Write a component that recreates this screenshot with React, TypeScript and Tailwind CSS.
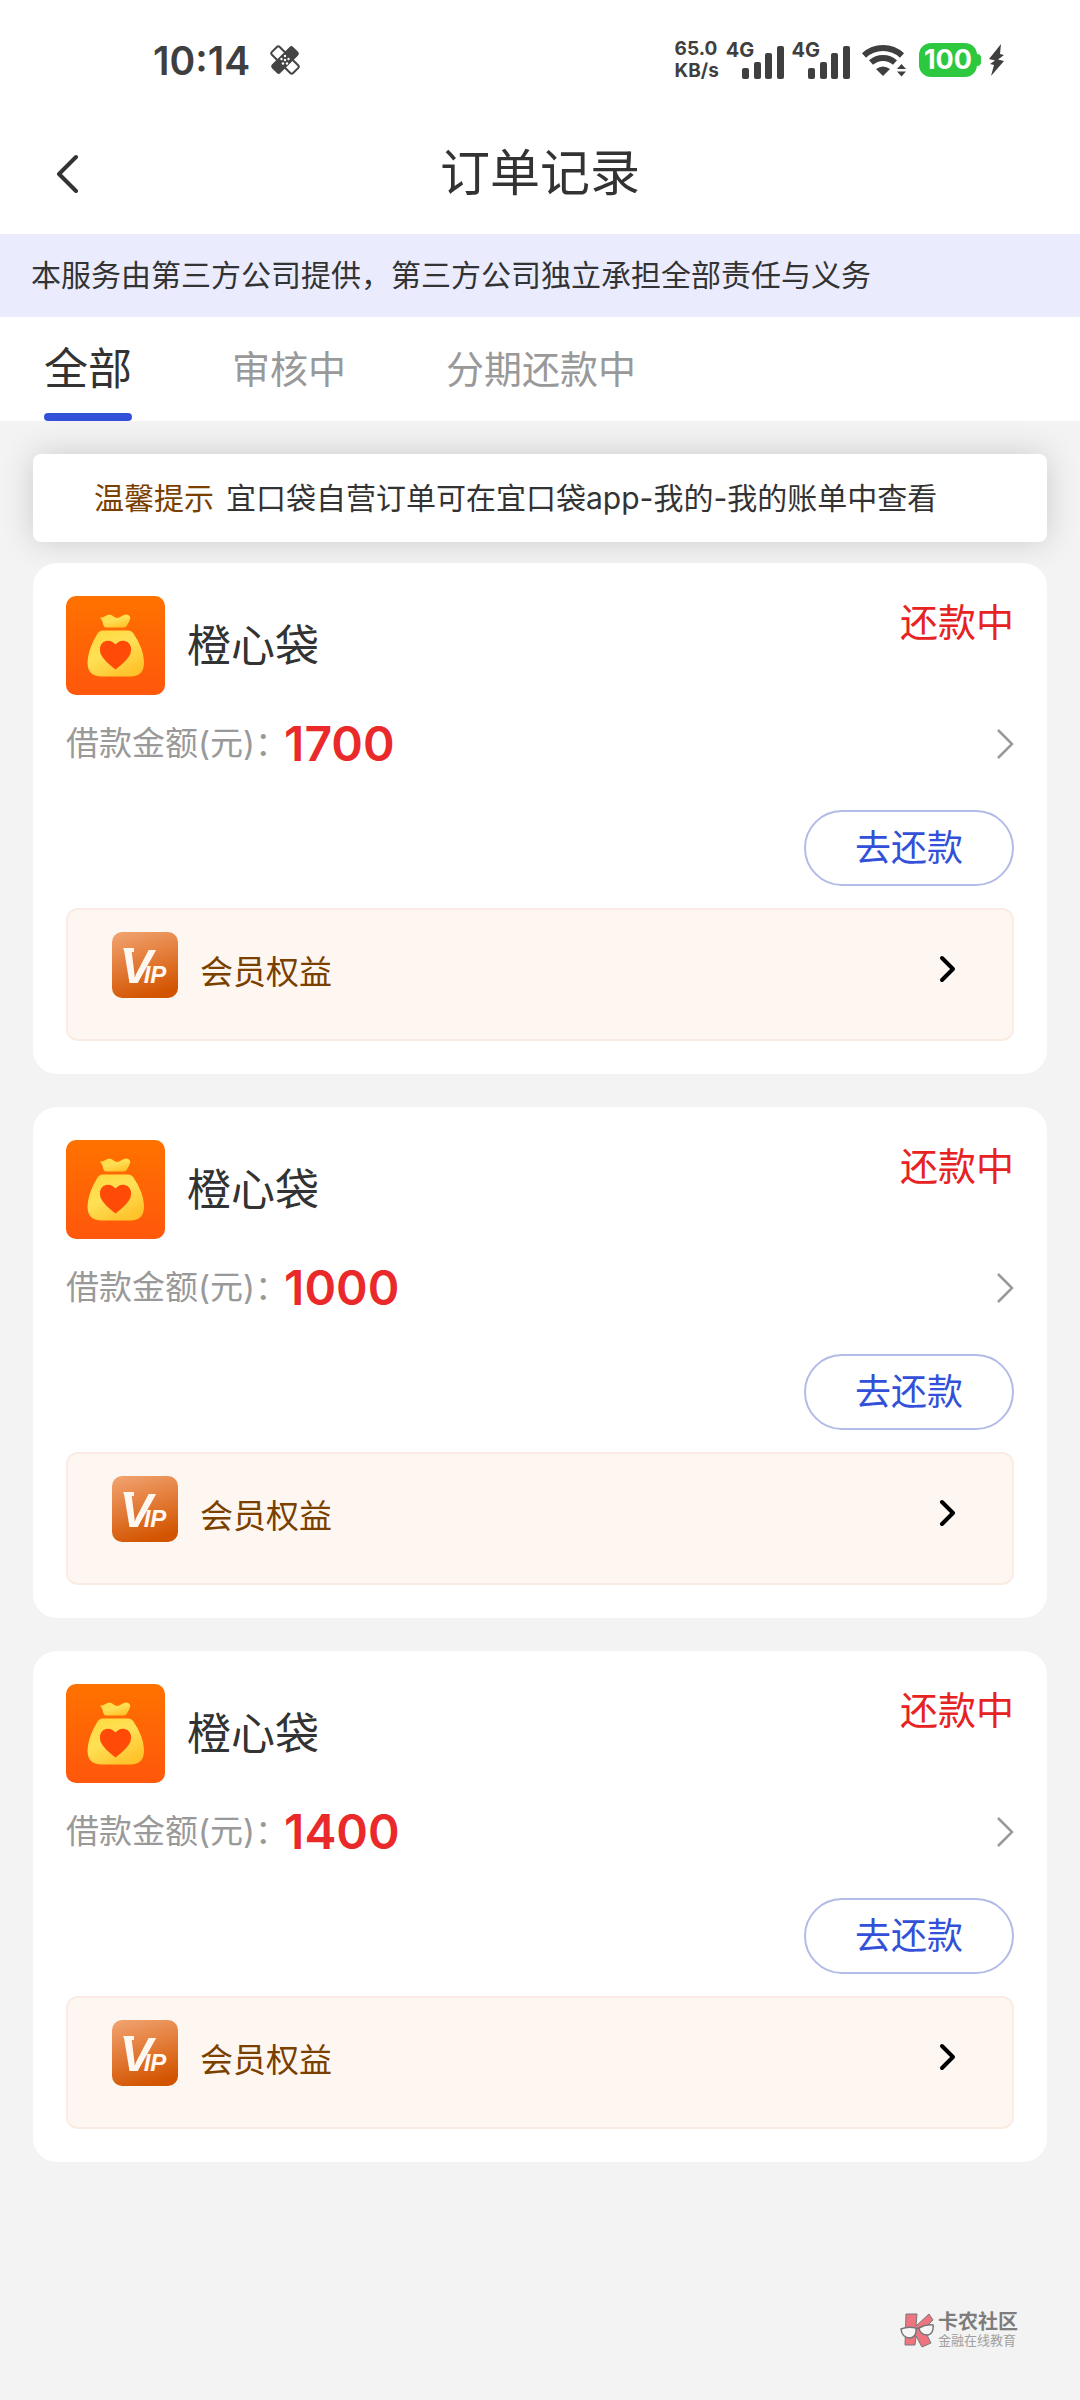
import { useState } from 'react'

/** 订单记录 — 状态栏、标题、筛选标签、订单卡片列表。 */

interface Order {
  id: string
  name: string
  amount: number
  status: string
}

const TABS = ['全部', '审核中', '分期还款中']

const ORDERS: Order[] = [
  { id: 'o1', name: '橙心袋', amount: 1700, status: '还款中' },
  { id: 'o2', name: '橙心袋', amount: 1000, status: '还款中' },
  { id: 'o3', name: '橙心袋', amount: 1400, status: '还款中' },
]

function BandageIcon() {
  return (
    <svg width="30" height="30" viewBox="0 0 30 30" aria-hidden="true">
      <rect x="9.500" y="0" width="11" height="30" rx="2" transform="rotate(-45 15 15)" fill="#fff" stroke="#444" strokeWidth="2" />
      <rect x="9" y="0" width="12" height="30" rx="2.500" transform="rotate(45 15 15)" fill="#444" />
      <g fill="#fff">
        <circle cx="15" cy="11" r="1.200" />
        <circle cx="11.500" cy="14" r="1.200" />
        <circle cx="18.500" cy="14" r="1.200" />
        <circle cx="15" cy="15" r="1.200" />
        <circle cx="13" cy="18.500" r="1.200" />
        <circle cx="17" cy="18.500" r="1.200" />
      </g>
    </svg>
  )
}

function Signal() {
  return (
    <div className="flex">
      <span className="text-[20px] leading-[20px]">4G</span>
      <svg width="42" height="40" viewBox="0 0 42 40" className="-ml-3" fill="#3f3f3f" aria-hidden="true">
        <rect x="0" y="28" width="7" height="11" rx="2" />
        <rect x="12" y="22" width="7" height="17" rx="2" />
        <rect x="23" y="13" width="7" height="26" rx="2" />
        <rect x="35" y="6" width="7" height="33" rx="2" />
      </svg>
    </div>
  )
}

function StatusBar() {
  return (
    <div className="flex h-28 items-center justify-between pl-[153px] pr-[75px] pt-2 font-bold text-[#3f3f3f]">
      <div className="flex items-center gap-5">
        <span className="text-[39px] font-semibold leading-none">10:14</span>
        <BandageIcon />
      </div>
      <div className="flex items-center gap-[7px]">
        <div className="flex flex-col text-[19px] leading-[22px]">
          <span>65.0</span>
          <span>KB/s</span>
        </div>
        <Signal />
        <Signal />
        <div className="flex items-center gap-2 pl-1">
          <svg width="46" height="34" viewBox="0 0 46 34" className="mr-1" aria-hidden="true">
            <path d="M3 12.500a28 28 0 0 1 38 0" fill="none" stroke="#3f3f3f" strokeWidth="6" />
            <path d="M10 19.500a18 18 0 0 1 24 0" fill="none" stroke="#3f3f3f" strokeWidth="6" />
            <path d="M15 26q7-5 14 0l-7 7z" fill="#3f3f3f" />
            <path d="M36 26l4.500-5 4.500 5zM36 28.500h9l-4.500 5z" fill="#3f3f3f" />
          </svg>
          <div className="flex items-center">
            <span className="rounded-xl bg-[#2bc840] px-[5px] text-[27px] leading-[34px] text-white">100</span>
            <span className="h-3 w-1 rounded-r bg-[#2bc840]" />
          </div>
          <svg width="16" height="32" viewBox="0 0 16 32" fill="#3f3f3f" aria-hidden="true">
            <path d="M12 0L0 15l6 1.500L1 20l4 1L2 32l13-15-6-1.500 6-4.500-4-1z" />
          </svg>
        </div>
      </div>
    </div>
  )
}

function BagLogo() {
  return (
    <svg width="99" height="99" viewBox="0 0 99 99" aria-hidden="true">
      <defs>
        <linearGradient id="bagBg" x1="0" y1="0" x2="0" y2="1">
          <stop offset="0" stopColor="#ff7200" />
          <stop offset="1" stopColor="#ff570c" />
        </linearGradient>
        <linearGradient id="bagFill" x1="0" y1="0" x2="0.600" y2="1">
          <stop offset="0" stopColor="#ffd83a" />
          <stop offset="0.500" stopColor="#ffe056" />
          <stop offset="1" stopColor="#ffc42c" />
        </linearGradient>
      </defs>
      <rect width="99" height="99" rx="10" fill="url(#bagBg)" />
      <path
        d="M34 21.500q3 0 5.500-1.500 4-3 7.500 0 4 3.500 8 .500 5-3.500 8-1 2 1.500 1 4l-3 6q-1 2-3.500 2H40q-2 0-2.500-2-.500-5-3.500-8z"
        fill="url(#bagFill)"
      />
      <path
        d="M37 34.500h25q3.500 0 5.500 3 10 15 10.500 28 .500 15-14 15H36Q21 80.500 21.500 66 22 53 31.500 37.500q2-3 5.500-3z"
        fill="url(#bagFill)"
      />
      <path
        d="M49.500 73.500Q37 64 34.500 57.500q-2-8 3-11.500 7-3.500 12 2.500 5-6 12-2.500 5 3.500 3 11.500-2.500 6.500-15 16z"
        fill="#ff4a08"
      />
    </svg>
  )
}

function VipLogo() {
  return (
    <svg width="66" height="66" viewBox="0 0 66 66" role="img" aria-label="VIP">
      <defs>
        <linearGradient id="vipBg" x1="0.200" y1="0" x2="0.500" y2="1">
          <stop offset="0" stopColor="#f0a06c" />
          <stop offset="1" stopColor="#d35400" />
        </linearGradient>
      </defs>
      <rect width="66" height="66" rx="10" fill="url(#vipBg)" />
      <text x="8" y="51" fontSize="49" fill="#fff8f0" className="font-['Liberation_Sans',sans-serif] font-bold italic">
        V<tspan dx="-9" fontSize="24">IP</tspan>
      </text>
      <path d="M11 16h11v4H13z" fill="#fff8f0" />
    </svg>
  )
}

function OrderCard({ order }: { order: Order }) {
  return (
    <li className="flex flex-col rounded-3xl bg-white p-[33px]">
      <div className="flex items-start justify-between">
        <div className="flex items-center gap-[22px]">
          <BagLogo />
          <h2 className="text-[44px] leading-[60px]">{order.name}</h2>
        </div>
        <span className="text-[38px] leading-[52px] text-[#e62222]">{order.status}</span>
      </div>

      <a href={`#${order.id}`} className="mt-[17px] flex h-16 items-center justify-between">
        <span className="flex items-center">
          <span className="text-[33px] text-[#999]">借款金额(元)：</span>
          <span className="-ml-1 text-[48px] font-semibold leading-none text-[#ea2a2a]">{order.amount}</span>
        </span>
        <svg width="18" height="30" viewBox="0 0 18 30" fill="none" stroke="#999" strokeWidth="2.500" aria-hidden="true">
          <path d="M2 1l14 14L2 29" />
        </svg>
      </a>

      <button
        type="button"
        className="mt-[34px] h-[76px] w-[210px] self-end rounded-full border-2 border-[#b3bce6] text-[36px] text-[#3350d8]"
      >
        去还款
      </button>

      <a
        href={`#${order.id}-vip`}
        className="mt-[22px] flex h-[133px] items-start justify-between rounded-xl border-2 border-[#faece2] bg-[#fef7f1] pl-11 pr-[55px] pt-[22px]"
      >
        <span className="flex items-start gap-[22px]">
          <VipLogo />
          <span className="text-[33px] leading-[80px] text-[#7b3f00]">会员权益</span>
        </span>
        <svg
          width="18" height="28" viewBox="0 0 18 28" className="mt-[23px]"
          fill="none" stroke="#000" strokeWidth="4" strokeLinecap="round" strokeLinejoin="round" aria-hidden="true"
        >
          <path d="M3 3l11 11L3 25" />
        </svg>
      </a>
    </li>
  )
}

function CommunityMark() {
  return (
    <div className="flex items-center gap-1 text-[#7d7d7d]">
      <svg width="34" height="36" viewBox="0 0 34 36" aria-hidden="true">
        <path d="M6 2l11 0-1 12L29 2l4 6-9 9 7 14-9 4-6-11-1 9-10 0z" fill="#ee7580" stroke="#777" strokeWidth="1" />
        <path d="M1 17q7-3 15-1 1 9-6 10-8 0-9-9zM19 16q7-4 14-3 1 8-5 10-8 0-9-7z" fill="#f6f6f6" stroke="#777" strokeWidth="1.500" />
        <path d="M16 17l3-1" stroke="#777" strokeWidth="1.500" />
      </svg>
      <div className="flex flex-col">
        <span className="text-[20px] font-bold leading-[20px]">卡农社区</span>
        <span className="text-[13px] leading-4 text-[#a0a0a0]">金融在线教育</span>
      </div>
    </div>
  )
}

export default function App() {
  const [active, setActive] = useState(TABS[0])

  return (
    <div className="flex min-h-screen flex-col bg-[#f3f3f3] font-['Inter','Noto_Sans_CJK_SC',sans-serif] text-[#333]">
      <div className="bg-white">
        <StatusBar />
        <header className="grid h-[122px] grid-cols-[1fr_auto_1fr] items-center px-[55px]">
          <button type="button" aria-label="返回" className="justify-self-start">
            <svg
              width="24" height="40" viewBox="0 0 24 40"
              fill="none" stroke="#333" strokeWidth="4" strokeLinecap="round" strokeLinejoin="round" aria-hidden="true"
            >
              <path d="M21 4L4 21l17 17" />
            </svg>
          </button>
          <h1 className="text-[50px] leading-[60px]">订单记录</h1>
        </header>
      </div>

      <p className="bg-[#eaecfe] px-[31px] text-[30px] leading-[83px]">
        本服务由第三方公司提供，第三方公司独立承担全部责任与义务
      </p>

      <nav className="flex h-[104px] gap-[100px] bg-white pl-11">
        {TABS.map((tab) => (
          <button
            key={tab}
            type="button"
            onClick={() => setActive(tab)}
            className={
              tab === active
                ? 'relative text-[44px] text-[#333]'
                : 'relative text-[38px] text-[#999]'
            }
          >
            {tab}
            {tab === active && (
              <span className="absolute inset-x-0 bottom-0 h-2 rounded-full bg-[#3350d8]" />
            )}
          </button>
        ))}
      </nav>

      <main className="flex flex-col px-[33px] pt-[33px]">
        <p className="flex gap-3 rounded-lg bg-white px-[61px] text-[30px] leading-[88px] shadow-[0_0_33px_rgba(0,0,0,0.16)]">
          <span className="text-[#7b3f00]">温馨提示</span>
          <span>宜口袋自营订单可在宜口袋app-我的-我的账单中查看</span>
        </p>
        <ul className="relative mt-[21px] flex flex-col gap-[33px]">
          {ORDERS.map((order) => (
            <OrderCard key={order.id} order={order} />
          ))}
        </ul>
      </main>

      <footer className="mt-auto flex justify-end pb-[52px] pr-[62px]">
        <CommunityMark />
      </footer>
    </div>
  )
}
